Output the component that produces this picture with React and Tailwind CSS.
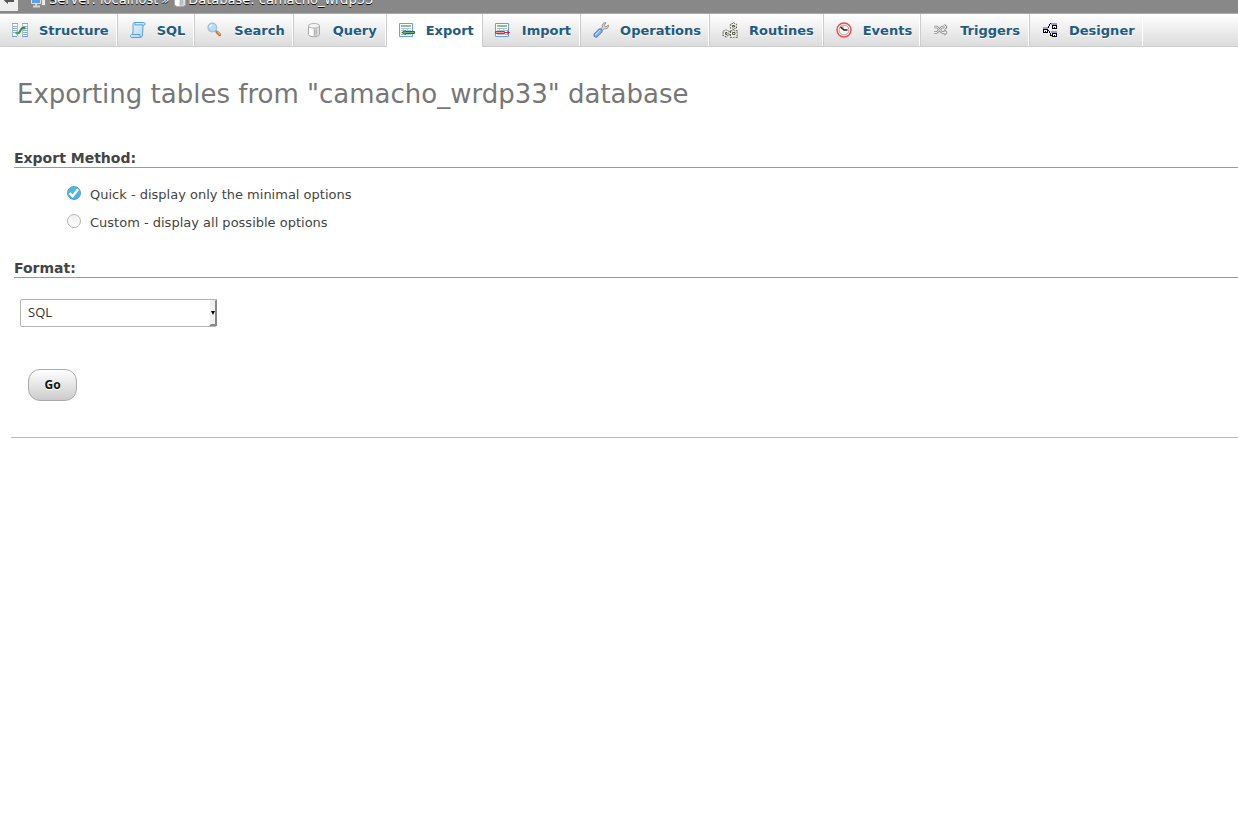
const StructureIcon = () => (
  <svg width="16" height="16" viewBox="0 0 16 16" aria-hidden="true">
    <path fill="#fff" d="M0 1h6v14H0zM10 1h6v14h-6z" />
    <path stroke="#a3bfdc" d="M0.5 1v14M5.5 1v13M10.5 1v14M15.5 1v14" />
    <path stroke="#7fa8d6" d="M0 1.5h6M10 1.5h6" />
    <path stroke="#8fb0d4" d="M1 4.5h4M1 6.5h4M1 8.5h4M1 10.5h4M11 4.5h5M11 6.5h5M11 8.5h5M11 10.5h5M11 12.5h5" />
    <path stroke="#6fa1d6" d="M0 14.5h5M10 14.5h6" />
    <path fill="none" stroke="#3f8f45" strokeWidth="2" strokeLinecap="round" strokeLinejoin="round" d="M5 11h2l3-5h2" />
    <circle cx="5" cy="11" r="1.6" fill="#55a45a" />
    <circle cx="12" cy="6" r="1.6" fill="#3f8f45" />
  </svg>
);

const SqlIcon = () => (
  <svg width="16" height="16" viewBox="0 0 16 16" aria-hidden="true">
    <defs>
      <linearGradient id="scroll" x1="0" y1="0" x2="1" y2="1">
        <stop offset="0" stopColor="#e6f5ff" />
        <stop offset="1" stopColor="#acd7f5" />
      </linearGradient>
    </defs>
    <path
      fill="url(#scroll)"
      stroke="#5a9ed2"
      d="M4.5 .5h9.2c1.2 0 1.6 1.2 1.3 2-.3.9-1.4 1-2 .6-.3 3.4 0 6.5-.5 9.9-.2 1.500-1 2.500-2.500 2.500H2c-1.300 0-1.800-1-1.400-2 .4-.9 1.400-1 2-1C3.400 8.500 3 5 3 2.500 3 1.300 3.500.5 4.500.5z"
    />
    <path fill="none" stroke="#5a9ed2" d="M4.500 .8c1 .5 .8 2.200 0 2.200M5 2.900h8M2.600 12.500h7.300c-.2 1.200 0 2.200.9 2.800" />
  </svg>
);

const SearchIcon = () => (
  <svg width="16" height="16" viewBox="0 0 16 16" aria-hidden="true">
    <path stroke="#b9703d" strokeWidth="3" strokeLinecap="round" d="M10 10l2.700 2.700" />
    <path stroke="#edb17c" strokeWidth="1.2" strokeLinecap="round" d="M10.3 9.700l2.600 2.600" />
    <path stroke="#808b96" strokeWidth="1.5" d="M8 8l1.500 1.500" />
    <circle cx="5.300" cy="5.500" r="4.300" fill="#b9dbf7" stroke="#9dbcdb" strokeWidth="1.2" />
    <path fill="none" stroke="#e4f3ff" strokeWidth="1.5" d="M2.800 5.300A2.700 2.700 0 0 1 5.300 2.900" />
  </svg>
);

const DatabaseIcon = () => (
  <svg width="16" height="16" viewBox="0 0 16 16" aria-hidden="true">
    <defs>
      <linearGradient id="cylinder">
        <stop offset="0" stopColor="#f8f8f8" />
        <stop offset=".35" stopColor="#fff" />
        <stop offset=".55" stopColor="#c5c5c5" />
        <stop offset="1" stopColor="#e9e9e9" />
      </linearGradient>
    </defs>
    <path fill="url(#cylinder)" stroke="#a8a8a8" d="M2.500 4v8.500c0 3 11 3 11 0V4z" />
    <ellipse cx="8" cy="3.800" rx="5.500" ry="2.300" fill="#f4f4f4" stroke="#b3b3b3" />
    <path stroke="#b5b5b5" d="M8.500 8v5M10.500 7.500v5" />
  </svg>
);

const Sheet = () => (
  <>
    <path fill="#fff" stroke="#6da0d6" d="M.5 1.500h13v13H.5z" />
    <path stroke="#8fc08f" strokeWidth="2" d="M2 4h10" />
    <path stroke="#a7c4e2" d="M2 6.500h10M2 8.500h10M2 10.500h10M2 12.500h10M4.500 6v7M8.500 6v7" />
  </>
);

const ExportIcon = () => (
  <svg width="16" height="16" viewBox="0 0 16 16" aria-hidden="true">
    <Sheet />
    <path fill="#72ad72" stroke="#24712f" d="M6.500 8.500L3 10.500l3.500 2v-1h9v-2h-9z" />
  </svg>
);

const ImportIcon = () => (
  <svg width="16" height="16" viewBox="0 0 16 16" aria-hidden="true">
    <Sheet />
    <path fill="#ff9a9a" stroke="#f01f32" d="M.5 9.500h9v2h-9zM9.500 10.500h5M12 8.500l2.500 2-2.500 2" />
  </svg>
);

const WrenchIcon = () => (
  <svg width="16" height="16" viewBox="0 0 16 16" aria-hidden="true">
    <path
      fill="#d8d8d8"
      stroke="#929292"
      d="M13 .8L10.800 1c-1.500 1-2 2.500-1.300 4L7 7.500 8.700 9l2.500-2.400c2 .6 3.700-.2 4.300-2L15.300 3 13 5l-2-1.500z"
    />
    <path stroke="#5084bd" strokeWidth="5" strokeLinecap="round" d="M3 13l4-4" />
    <path stroke="#8dbcf0" strokeWidth="3" strokeLinecap="round" d="M3 13l4-4" />
    <path stroke="#c1dcf8" strokeLinecap="round" d="M2.500 12.500L6.500 8.500" />
  </svg>
);

const RoutinesIcon = () => (
  <svg width="16" height="16" viewBox="0 0 16 16" aria-hidden="true">
    <g fill="#f4f4ee" stroke="#55584f" strokeDasharray="2 1">
      <path d="M11.500.5l1.200 1.300 2 .5-.7 1.700.7 2-2 .5-1.200 1.500-1.300-1.500-2-.5.700-2-.7-1.700 2-.5z" />
      <path d="M4 7.500l1.300 1.300 2 .5-.6 2 .6 2-2 .4L4 15.300l-1.300-1.600-2-.4.600-2-.6-2 2-.5z" />
      <path d="M8.500 8.500l2 .5 1-1 1.200 1 2.800-.5-.5 2.300.500 1.200-.5 1 .5 2.500-2.800-.5-1.200.5-1-.5-2 .5z" />
    </g>
    <path fill="none" stroke="#55584f" d="M10.500 3.500h2v1.500h-2zM3.500 10.500h1.500v2H3.500zM10.500 10.500h2.500v2h-2.500z" />
  </svg>
);

const EventsIcon = () => (
  <svg width="16" height="16" viewBox="0 0 16 16" aria-hidden="true">
    <circle cx="8" cy="8" r="7" fill="#fff" stroke="#f34a53" strokeWidth="1.5" />
    <circle cx="8" cy="8" r="5" fill="#f5f5ef" stroke="#a0a09d" />
    <path fill="#f7a6a6" d="M8 8L4 5.500 7.500 3z" />
    <path fill="none" stroke="#222" strokeWidth="1.4" d="M4.500 5l3.500 3h3.500" />
  </svg>
);

const TriggersIcon = () => (
  <svg width="16" height="16" viewBox="0 0 16 16" aria-hidden="true">
    <g fill="none" strokeLinejoin="round">
      <path stroke="#8e8e8e" strokeWidth="2.6" d="M1 5h3l5 5.500h4M1 10.500h3L9 5h4M11 3l2 2-2 2M11 8.500l2 2-2 2" />
      <path stroke="#efefef" d="M1 5h3l5 5.500h4M1 10.500h3L9 5h4M11 3l2 2-2 2M11 8.500l2 2-2 2" />
    </g>
  </svg>
);

const DesignerIcon = () => (
  <svg width="16" height="16" viewBox="0 0 16 16" shapeRendering="crispEdges" aria-hidden="true">
    <path fill="#fff" stroke="#000" d="M1.500 7.500h4v3h-4zM10.500 3.500h4v3h-4zM10.500 11.500h4v3h-4z" />
    <path stroke="#9a9ad0" strokeWidth="2" d="M1 6h5M9 2h6M9 10h6" />
    <path fill="none" stroke="#000" d="M9 1.500h-1M7.500 2v2M6.500 4v2M6 8.500h1M7.500 9v2M8.500 11v2M8 13.500h2M3 9.500h1M12 5.500h1M12 13.500h1" />
  </svg>
);

const ServerIcon = () => (
  <svg width="16" height="16" viewBox="0 0 16 16" aria-hidden="true">
    <path fill="#e9e9e3" stroke="#92928c" d="M11.500 1.500h4v12h-4z" />
    <path fill="#5da2df" stroke="#d5e2ec" d="M1.500 2.500h9v9h-9z" />
    <path stroke="#d6d6d1" strokeWidth="2" d="M6 12v2M3 14.500h7" />
  </svg>
);

const tabs = [
  { label: "Structure", Icon: StructureIcon },
  { label: "SQL", Icon: SqlIcon },
  { label: "Search", Icon: SearchIcon },
  { label: "Query", Icon: DatabaseIcon },
  { label: "Export", Icon: ExportIcon, active: true },
  { label: "Import", Icon: ImportIcon },
  { label: "Operations", Icon: WrenchIcon },
  { label: "Routines", Icon: RoutinesIcon },
  { label: "Events", Icon: EventsIcon },
  { label: "Triggers", Icon: TriggersIcon },
  { label: "Designer", Icon: DesignerIcon },
];

const methods = [
  { value: "quick", label: "Quick - display only the minimal options" },
  { value: "custom", label: "Custom - display all possible options" },
];

const Breadcrumb = () => (
  <div className="flex h-[13px] items-end overflow-hidden bg-[#888] text-[13px] leading-4 text-white [text-shadow:0_1px_0_#000]">
    <button className="mb-0.5 flex h-5 w-[18px] items-end justify-center bg-[#eee] pb-[7px]" aria-label="Back">
      <svg width="12" height="10" viewBox="0 0 12 10" aria-hidden="true">
        <path fill="#555" d="M1 6.500l4-3.500v2h6v3H5v2z" />
      </svg>
    </button>
    <nav className="ml-3 flex items-end gap-[3px] pb-[5px]">
      <a href="#server" className="flex items-end gap-[3px]">
        <ServerIcon />
        <span>Server: localhost</span>
      </a>
      <span>»</span>
      <a href="#database" className="flex items-end">
        <DatabaseIcon />
        <span>Database: camacho_wrdp33</span>
      </a>
    </nav>
  </div>
);

const TabBar = () => (
  <nav className="flex h-[34px] border-y border-t-[#aaa] border-b-[#ccc] bg-linear-to-b from-white to-[#dcdcdc]">
    {tabs.map(({ label, Icon, active }) => (
      <a
        key={label}
        href={`#${label.toLowerCase()}`}
        className={`flex items-center gap-[11px] border-r border-l border-r-white border-l-[#ccc] pr-[7px] pl-3 text-[13px] font-bold whitespace-nowrap text-[#235a81] [text-shadow:0_1px_0_#fff] first:border-l-0 even:pr-2 ${
          active ? "-mb-px bg-white pb-px" : ""
        }`}
      >
        <Icon />
        <span className="pt-0.5">{label}</span>
      </a>
    ))}
  </nav>
);

const SectionTitle = ({ children }) => (
  <h3 className="border-b border-[#999] text-sm leading-[18px] font-bold">{children}</h3>
);

const App = () => {
  return (
    <div className="overflow-x-hidden bg-white font-['DejaVu_Sans',sans-serif] text-[13px] text-[#444]">
      <Breadcrumb />
      <TabBar />
      <form className="pl-[11px]" onSubmit={(e) => e.preventDefault()}>
        <h2 className="pt-[31px] pl-1.5 text-[26px] leading-8 text-[#777]">
          Exporting tables from "camacho_wrdp33" database
        </h2>

        <section className="pt-[39px] pl-[3px]">
          <SectionTitle>Export Method:</SectionTitle>
          <ul className="flex flex-col gap-2 pt-4 pl-[53px]">
            {methods.map((method) => (
              <li key={method.value} className="flex h-5 items-center gap-[9px]">
                <span className="relative -mt-0.5 h-3.5 w-3.5">
                  <input
                    type="radio"
                    id={method.value}
                    name="method"
                    value={method.value}
                    defaultChecked={method.value === "quick"}
                    className="peer block h-3.5 w-3.5 appearance-none rounded-full border border-[#b5b5b5] bg-linear-to-b from-[#f0f0f0] to-white checked:border-[#4c9dcb] checked:from-[#55b9e8] checked:to-[#4ab0e3]"
                  />
                  <svg
                    className="pointer-events-none absolute inset-0 hidden peer-checked:block"
                    viewBox="0 0 14 14"
                    aria-hidden="true"
                  >
                    <path fill="none" stroke="#fff" strokeWidth="2.4" d="M2.500 7.200l3.200 3L11 3.200" />
                  </svg>
                </span>
                <label htmlFor={method.value} className="pt-0.5">
                  {method.label}
                </label>
              </li>
            ))}
          </ul>
        </section>

        <section className="pt-[27px] pl-[3px]">
          <SectionTitle>Format:</SectionTitle>
          <div className="relative mt-[21px] ml-1.5 h-7 w-[197px]">
            <select
              aria-label="Format"
              className="h-full w-full appearance-none rounded-xs border border-[#b5b5b5] bg-white px-[7px] font-['Open_Sans',sans-serif] text-[13px] text-[#333]"
            >
              <option>SQL</option>
            </select>
            <svg
              className="pointer-events-none absolute top-0 right-0"
              width="8"
              height="28"
              viewBox="0 0 8 28"
              aria-hidden="true"
            >
              <path fill="#f0f0f0" d="M1 1h5v25H1z" />
              <path fill="#888" d="M6 2l2-2v27H0l2-2h4z" />
              <path fill="#000" d="M2 12h4l-2 4z" />
            </svg>
          </div>
        </section>

        <div className="mt-[42px] border-b border-[#bbb] pb-9 pl-[17px]">
          <button
            type="submit"
            className="block h-8 w-[49px] rounded-xl border border-[#aaa] bg-linear-to-b from-white to-[#ccc] font-['Open_Sans',sans-serif] text-xs font-bold text-[#111] [text-shadow:0_1px_0_#fff]"
          >
            Go
          </button>
        </div>
      </form>
    </div>
  );
};

export default App;
